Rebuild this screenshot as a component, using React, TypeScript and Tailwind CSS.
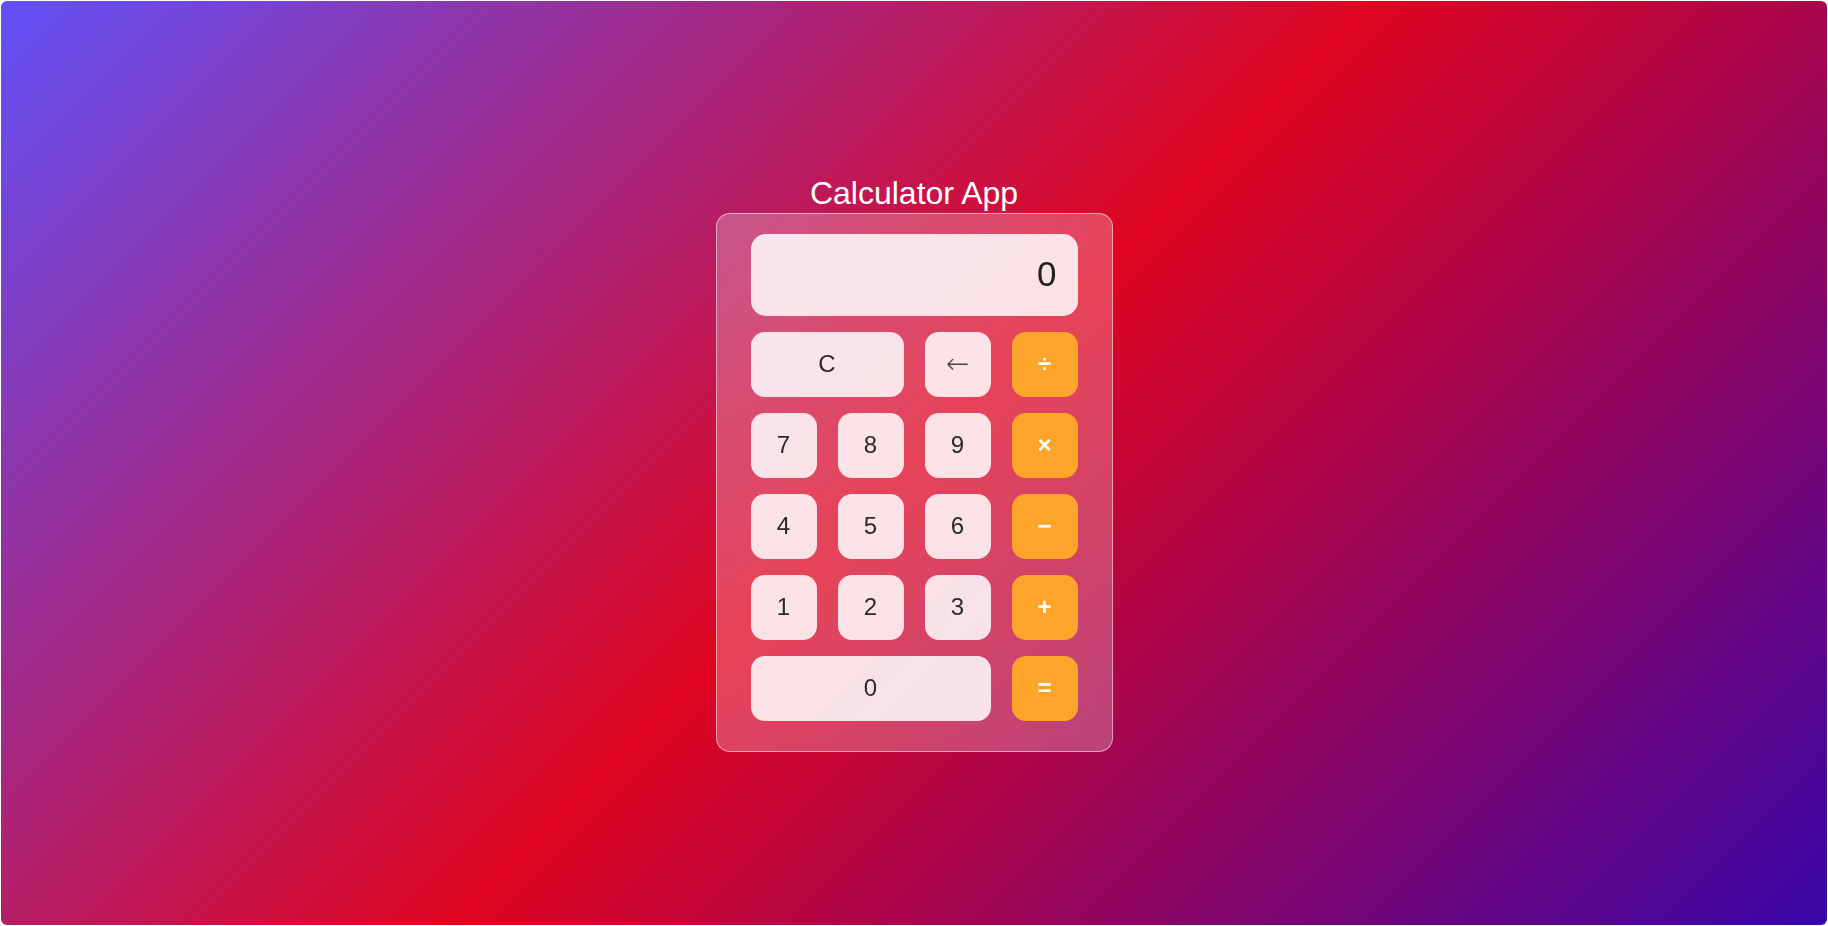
import React from "react";

const keys: { label: string; kind: "num" | "op"; span?: string; font?: string }[] = [
  { label: "C", kind: "num", span: "col-span-2" },
  { label: "←", kind: "num", font: "font-['DejaVu_Sans',sans-serif] !text-[28px] font-extralight text-[#444]" },
  { label: "÷", kind: "op" },
  { label: "7", kind: "num" },
  { label: "8", kind: "num" },
  { label: "9", kind: "num" },
  { label: "×", kind: "op" },
  { label: "4", kind: "num" },
  { label: "5", kind: "num" },
  { label: "6", kind: "num" },
  { label: "−", kind: "op" },
  { label: "1", kind: "num" },
  { label: "2", kind: "num" },
  { label: "3", kind: "num" },
  { label: "+", kind: "op" },
  { label: "0", kind: "num", span: "col-span-3" },
  { label: "=", kind: "op" },
];

export default function App() {
  return (
    <div className="h-screen w-full bg-white p-px font-['Liberation_Sans',Arial,sans-serif]">
      <div className="flex h-full w-full flex-col items-center justify-center rounded-md bg-[linear-gradient(135deg,#6151f8_0%,#df0520_50%,#3806a8_100%)]">
        <h1 className="text-[32px] leading-[37px] text-white">Calculator App</h1>
        <div className="mt-px w-[397px] rounded-[14px] border border-white/50 bg-white/25 px-[34px] pt-[20px] pb-[30px] backdrop-blur-md">
          <div className="flex h-[82px] items-center justify-end rounded-[15px] bg-white/85 pr-[21px] text-[35px] text-[#222]">
            0
          </div>
          <div className="mt-4 grid grid-cols-4 gap-x-[21px] gap-y-4">
            {keys.map((k) => (
              <button
                key={k.label}
                className={
                  "flex h-[65px] items-center justify-center rounded-[14px] text-[24px] " +
                  (k.span ? k.span + " " : "") +
                  (k.kind === "op"
                    ? "bg-[#fda52a] font-semibold text-white"
                    : "bg-white/85 text-[#2b2b2b]") +
                  (k.font ? " " + k.font : "")
                }
              >
                {k.label}
              </button>
            ))}
          </div>
        </div>
      </div>
    </div>
  );
}
